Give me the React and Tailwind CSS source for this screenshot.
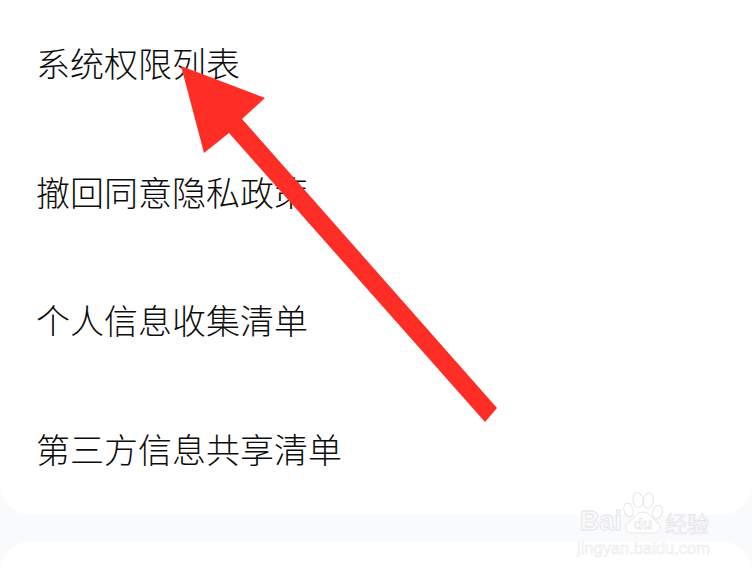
import React from "react";

const rows = ["系统权限列表", "撤回同意隐私政策", "个人信息收集清单", "第三方信息共享清单"];

const Arrow = () => (
  <svg className="absolute inset-0 pointer-events-none" width="752" height="572" viewBox="0 0 752 572">
    <polygon
      points="181,66 265,98 242,119 497,408 485,422 229,133 204,153"
      fill="#fe2e27"
    />
  </svg>
);

const Paw = () => (
  <div className="relative w-[40px] h-[42px] shrink-0">
    <svg width="40" height="42" viewBox="0 0 40 42" fill="#ffffff" stroke="#e3e5e8" strokeWidth="1">
      <ellipse cx="5.5" cy="18" rx="4.5" ry="7" transform="rotate(-15 5.5 18)" />
      <ellipse cx="15" cy="8" rx="5" ry="7.5" transform="rotate(-8 15 8)" />
      <ellipse cx="25.5" cy="8.5" rx="5" ry="7.5" transform="rotate(8 25.5 8.5)" />
      <ellipse cx="34.5" cy="20" rx="4.5" ry="7" transform="rotate(15 34.5 20)" />
      <path d="M20 20 C13 20 10 28 5 31 C1 34 2 41 9 41 L31 41 C38 41 39 34 35 31 C30 28 27 20 20 20 Z" />
    </svg>
    <span className="absolute inset-x-0 bottom-[2px] text-center text-[15px] leading-[16px] font-bold text-[#fafafa] [-webkit-text-stroke:0.5px_#dcdee2]">
      du
    </span>
  </div>
);

const Watermark = () => (
  <div className="absolute left-[577px] top-[492px] w-[136px] flex flex-col font-['Liberation_Sans',sans-serif] pointer-events-none">
    <div className="flex items-end pl-[3px]">
      <span className="w-[43px] text-[27px] leading-[25px] font-bold text-[#fbfbfb] [-webkit-text-stroke:0.8px_#e2e4e7]">Bai</span>
      <Paw />
      <span className="pl-[2px] text-[22px] leading-[24px] font-['Noto_Sans_CJK_SC',sans-serif] whitespace-nowrap text-[#fbfbfb] [-webkit-text-stroke:0.6px_#dfe1e4]">经验</span>
    </div>
    <span className="mt-[5px] text-[16.5px] leading-[18px] whitespace-nowrap text-[#fbfbfb] [-webkit-text-stroke:0.4px_#e4e6e9]">jingyan.baidu.com</span>
  </div>
);

export default function App() {
  return (
    <div className="relative w-[752px] h-[572px] overflow-hidden bg-[#f9fafc] font-['Noto_Sans_CJK_SC','Noto_Sans',sans-serif] text-[#0c0c0c]">
      <div className="h-[515px] bg-white rounded-b-[32px] flex flex-col pl-[36px]">
        {rows.map((label) => (
          <div key={label} className="h-[128.6px] pb-[2px] flex items-center text-[34px] leading-none font-light">
            {label}
          </div>
        ))}
      </div>
      <div className="mt-[26px] h-[40px] bg-white rounded-t-[32px]" />
      <Arrow />
      <Watermark />
    </div>
  );
}
